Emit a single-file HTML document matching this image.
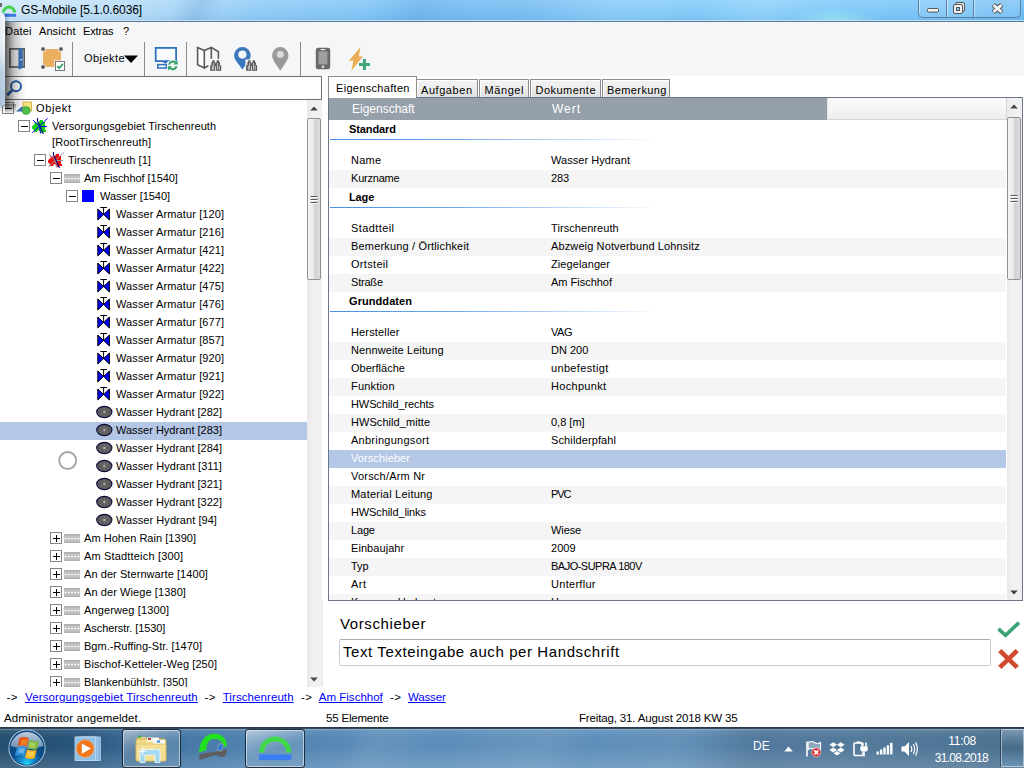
<!DOCTYPE html>
<html><head><meta charset="utf-8"><title>GS-Mobile [5.1.0.6036]</title>
<style>
html,body{margin:0;padding:0;}
body{width:1024px;height:768px;overflow:hidden;position:relative;background:#f5f6f7;font-family:"Liberation Sans",sans-serif;font-size:12px;color:#000;}
div,span,svg{position:absolute;box-sizing:border-box;}
span{white-space:nowrap;}
.t{font-size:11px;letter-spacing:0.05px;}
.tt{font-size:12px;letter-spacing:-0.15px;}
.p{font-size:11px;letter-spacing:0.16px;}
.pb{font-size:11px;font-weight:bold;letter-spacing:-0.1px;}
.h{font-size:12px;color:#fff;letter-spacing:-0.09px;}
.tab{font-size:11px;letter-spacing:0.2px;}
.big{font-size:15px;}
.inp{font-size:15px;}
.lnk{font-size:11.5px;color:#0000ff;text-decoration:underline;}
.st{font-size:11.5px;}
.tray{font-size:12px;color:#fff;}
</style></head>
<body>
<div style="left:0px;top:0px;width:1024px;height:22px;background:linear-gradient(90deg,#cfe8f9 0px,#b9ddf7 120px,#8fcbf6 260px,#7cc3f6 420px,#74bbf1 520px,#7fc8f8 640px,#86cdfa 760px,#7cc6f8 900px,#6fbdf5 1024px);"></div>
<div style="left:0px;top:0px;width:1024px;height:22px;background:linear-gradient(180deg,rgba(255,255,255,0.15) 0,rgba(255,255,255,0) 60%,rgba(40,90,150,0.10) 100%);"></div>
<div style="left:0px;top:0px;width:1024px;height:21px;background:linear-gradient(115deg,rgba(255,255,255,0) 0,rgba(255,255,255,0) 17%,rgba(60,110,170,.16) 19.500%,rgba(255,255,255,0) 22%,rgba(255,255,255,0) 36%,rgba(40,110,190,.14) 41%,rgba(255,255,255,0) 47%,rgba(255,255,255,.10) 60%,rgba(255,255,255,0) 68%,rgba(255,255,255,.08) 74%,rgba(255,255,255,0) 80%);"></div>
<div style="left:790px;top:8px;width:90px;height:13px;background:radial-gradient(ellipse at 50% 100%,rgba(170,250,235,.55) 0,rgba(170,250,235,0) 70%);"></div>
<div style="left:0px;top:21px;width:1024px;height:1px;background:#5b7a97;"></div>
<div style="left:0px;top:20px;width:1024px;height:1px;background:#cfe9fb;opacity:.8;"></div>
<svg style="left:1px;top:1px" width="18" height="18" viewBox="0 0 18 18"><path d="M2.4 11.6 A5.6 5.6 0 0 1 13.600 11.6" fill="none" stroke="#3fd24a" stroke-width="2.8"/><rect x="1.5" y="12.8" width="13.600" height="3" fill="#3b7be0"/></svg>
<span class="tt" style="left:21px;top:2.0px;line-height:16px;letter-spacing:-0.11px">GS-Mobile [5.1.0.6036]</span>
<svg style="left:916px;top:0px" width="108" height="20" viewBox="0 0 108 20">
<path d="M2.5 0 V13.5 Q2.5 17.5 6.5 17.5 H100.5 Q104.5 17.5 104.5 13.5 V0" fill="rgba(255,255,255,0.12)" stroke="#5a7fa3" stroke-width="1"/>
<path d="M30.5 0V17M57.5 0V17" stroke="#5a7fa3" stroke-width="1"/>
<path d="M31.5 0V17M58.5 0V17M3.5 0V13" stroke="rgba(255,255,255,.45)" stroke-width="1"/>
<rect x="11.5" y="8.5" width="11" height="3.6" rx="1" fill="#f2f2f2" stroke="#555" stroke-width="1"/>
<rect x="39.5" y="2.5" width="9" height="9" rx="1.5" fill="#e8e8e8" stroke="#555" stroke-width="1"/>
<rect x="37.5" y="4.5" width="9" height="9" rx="1.5" fill="#f2f2f2" stroke="#555" stroke-width="1"/>
<rect x="40.500" y="7.500" width="3" height="3" fill="#8fc4ee" stroke="#555" stroke-width="1"/>
<path d="M77.300 4.800L85.700 12.200M85.700 4.800L77.300 12.200" stroke="#4e4e4e" stroke-width="4.800" fill="none"/><path d="M77.600 5.100L85.400 11.900M85.400 5.100L77.600 11.900" stroke="#f4f4f4" stroke-width="2.800" fill="none"/>
</svg>
<div style="left:0px;top:22px;width:1024px;height:55px;background:#f5f6f7;"></div>
<span class="t" style="left:5px;top:23.0px;line-height:16px;letter-spacing:0.20px">Datei</span>
<span class="t" style="left:39px;top:23.0px;line-height:16px;letter-spacing:0.07px">Ansicht</span>
<span class="t" style="left:83px;top:23.0px;line-height:16px;letter-spacing:-0.14px">Extras</span>
<span class="t" style="left:123px;top:23.0px;line-height:16px;">?</span>
<div style="left:72px;top:42px;width:1px;height:34px;background:#8a8a8a;"></div>
<div style="left:144px;top:42px;width:1px;height:34px;background:#8a8a8a;"></div>
<div style="left:186px;top:42px;width:1px;height:34px;background:#8a8a8a;"></div>
<div style="left:300px;top:42px;width:1px;height:34px;background:#8a8a8a;"></div>
<div style="left:0px;top:76px;width:322px;height:1px;background:#6e6e6e;"></div>
<svg style="left:6px;top:44px" width="22" height="28" viewBox="0 0 22 28">
<rect x="3.900" y="4.900" width="14.300" height="18.100" fill="#f0f1f2" stroke="#585858" stroke-width="1.600"/>
<path d="M12.400 3.600 L16.900 5 V24 L12.400 25.500 Z" fill="#3a74b8"/>
<rect x="14.600" y="15" width="1.500" height="1.200" fill="#fff"/>
</svg>
<svg style="left:38px;top:44px" width="30" height="30" viewBox="0 0 30 30">
<rect x="5" y="5" width="18" height="18" rx="1.5" fill="#eab060"/>
<g fill="#4a4a4a" stroke="#f5f6f7" stroke-width=".8"><rect x="3" y="3" width="4" height="4"/><rect x="21" y="3" width="4" height="4"/><rect x="3" y="21" width="4" height="4"/></g><rect x="16.300" y="16.300" width="11.400" height="11.400" fill="#f5f6f7"/>
<rect x="17.5" y="17.5" width="9" height="9" fill="#fff" stroke="#777" stroke-width="1"/>
<path d="M19.3 22.2l2 2 3.6-4.4" fill="none" stroke="#2e9e63" stroke-width="1.8"/>
</svg>
<span class="t" style="left:84px;top:50.0px;line-height:16px;letter-spacing:0.46px">Objekte</span>
<svg style="left:122px;top:54px" width="18" height="10" viewBox="0 0 18 10"><path d="M2 1.5H16L9 9z" fill="#000"/></svg>
<svg style="left:153px;top:44px" width="28" height="28" viewBox="0 0 28 28">
<rect x="2.7" y="3.9" width="20.4" height="13.2" fill="#fafbfc" stroke="#2f72c0" stroke-width="1.8"/>
<rect x="10.5" y="17.6" width="3.5" height="1.6" fill="#2f72c0"/>
<rect x="4.8" y="20.6" width="8.6" height="3.4" fill="#fafbfc" stroke="#2f72c0" stroke-width="1.5"/>
<circle cx="19.8" cy="21.4" r="5.9" fill="#f5f6f7"/>
<path d="M16.1 20.6a3.9 3.9 0 0 1 6.6-1.9M23.5 22.2a3.9 3.9 0 0 1-6.6 1.9" fill="none" stroke="#27a05f" stroke-width="1.9"/>
<path d="M24.6 16.4v4.2h-4.2zM15 26.4v-4.2h4.2z" fill="#27a05f"/>
</svg>
<svg style="left:195px;top:44px" width="30" height="30" viewBox="0 0 30 30">
<path d="M2.6 3.6 L9.3 6.6 V24 L2.6 20.8 Z" fill="#fafbfc" stroke="#5a5a5a" stroke-width="1.6"/><path d="M9.3 6.6 L16.3 3.4 L23.4 7.8 V14.8 M16.3 3.4 V14.8 M9.3 24 L13.4 21.8" fill="none" stroke="#5a5a5a" stroke-width="1.6"/>
<g transform="translate(15.2,16.2)"><g fill="#585858"><rect x="2.2" y="0" width="2.2" height="2.4"/><rect x="1.3" y="1.8" width="3.7" height="3.6"/><rect x="0" y="5" width="5.1" height="5.6"/>
<rect x="6.6" y="0" width="2.2" height="2.4"/><rect x="6" y="1.8" width="3.7" height="3.6"/><rect x="5.9" y="5" width="5.1" height="5.6"/><rect x="4.6" y="3" width="1.8" height="3"/></g>
<g fill="#e0e0e0"><rect x="1.7" y="5.6" width=".9" height="4"/><rect x="3.2" y="2.6" width=".8" height="7"/><rect x="7.1" y="2.6" width=".8" height="7"/><rect x="8.6" y="5.6" width=".9" height="4"/></g></g></svg>
<svg style="left:231px;top:44px" width="30" height="30" viewBox="0 0 30 30">
<path d="M11.4 3 a8.3 8.3 0 0 1 8.3 8.3 c0 4.6-5 9.4-8.3 14.2 c-3.3-4.8-8.3-9.6-8.3-14.2 A8.3 8.3 0 0 1 11.4 3z" fill="#3b78bd"/>
<circle cx="11.4" cy="10.6" r="4.1" fill="#f5f6f7"/>
<rect x="14.4" y="15.4" width="13" height="13" fill="#f5f6f7"/>
<g transform="translate(15.1,16.2)"><g fill="#585858"><rect x="2.2" y="0" width="2.2" height="2.4"/><rect x="1.3" y="1.8" width="3.7" height="3.6"/><rect x="0" y="5" width="5.1" height="5.6"/>
<rect x="6.6" y="0" width="2.2" height="2.4"/><rect x="6" y="1.8" width="3.7" height="3.6"/><rect x="5.9" y="5" width="5.1" height="5.6"/><rect x="4.6" y="3" width="1.8" height="3"/></g>
<g fill="#e0e0e0"><rect x="1.7" y="5.6" width=".9" height="4"/><rect x="3.2" y="2.6" width=".8" height="7"/><rect x="7.1" y="2.6" width=".8" height="7"/><rect x="8.6" y="5.6" width=".9" height="4"/></g></g></svg>
<svg style="left:270px;top:44px" width="22" height="30" viewBox="0 0 22 30">
<path d="M10.3 3 a8.2 8.2 0 0 1 8.2 8.2 c0 4.6-4.8 10-8.2 15.6 c-3.4-5.6-8.2-11-8.2-15.6 A8.2 8.2 0 0 1 10.3 3z" fill="#9a9a9a"/>
<circle cx="10.3" cy="10.4" r="3.4" fill="#dcdcdc"/></svg>
<svg style="left:313px;top:45px" width="20" height="26" viewBox="0 0 20 26">
<rect x="2.8" y="2.8" width="14.4" height="21.4" rx="2.2" fill="#6a6a6a"/>
<rect x="5.6" y="6.4" width="8.8" height="13" fill="#a0a0a0"/>
<rect x="7.5" y="4" width="5" height="1.2" rx=".6" fill="#e6e6e6"/>
<circle cx="10" cy="21.8" r="1.3" fill="#e6e6e6"/></svg>
<svg style="left:346px;top:44px" width="28" height="30" viewBox="0 0 28 30">
<path d="M14.600 3 L2.700 16.900 L7.600 16.600 L5.250 26.900 L17 12.200 L12.750 12.600 Z" fill="#ebae52"/>
<path d="M13 20.450H24M18.450 15V26" stroke="#3fa779" stroke-width="3"/></svg>
<div style="left:0px;top:75.5px;width:1024px;height:652.5px;background:#fff;"></div>
<div style="left:-1px;top:76px;width:323px;height:24px;background:#fff;border:1px solid #6e6e6e;"></div>
<svg style="left:3px;top:78px" width="22" height="22" viewBox="0 0 22 22">
<circle cx="13" cy="8.200" r="5" fill="none" stroke="#1f5fa8" stroke-width="1.900"/>
<path d="M9 12.400 L4.200 17.200" stroke="#1f5fa8" stroke-width="2.700"/></svg>
<div style="left:0px;top:422px;width:307px;height:18px;background:#b4c7e7;"></div>
<div style="left:2px;top:102px;width:12px;height:12px;border:1px solid #848484;background:#fff;"><div style="left:2px;top:5px;width:7px;height:1px;background:#000"></div></div>
<svg style="left:15px;top:101px" width="18" height="15" viewBox="0 0 18 15">
<rect x="8" y="1" width="8.5" height="9" fill="#f6e27a" stroke="#c9a93a" stroke-width=".8"/>
<path d="M1 10.5 L7.5 5 V10.5 Z" fill="#3a73b8"/>
<circle cx="11.2" cy="9.6" r="4" fill="#4fbf4a" stroke="#2f8f34" stroke-width=".6"/></svg>
<span class="t" style="left:36px;top:100.0px;line-height:16px;letter-spacing:0.64px">Objekt</span>
<div style="left:18px;top:120px;width:12px;height:12px;border:1px solid #848484;background:#fff;"><div style="left:2px;top:5px;width:7px;height:1px;background:#000"></div></div>
<svg style="left:32px;top:118px" width="16" height="16" viewBox="0 0 16 16">
<path d="M8 2H11V4H13V12H14V14H11V15H9L8 13L6 12L5 14H2V12L0 10.5V9L1 7L3 6L2 4H4L5 5L7 4L7.5 3Z" fill="#10d010"/>
<path d="M.3 14.700L15.700 .3M1 2L7 8M8 8.500H15M7.500 9L8.500 15.500" stroke="#0000ff" stroke-width="1" fill="none"/>
<path d="M5.500 0V3L7 6L8 8L9.500 12L11 15L11.500 16" stroke="#00008a" stroke-width="1.100" fill="none"/></svg>
<span class="t" style="left:52px;top:118.0px;line-height:16px;letter-spacing:0.09px">Versorgungsgebiet Tirschenreuth</span>
<span class="t" style="left:52px;top:134.0px;line-height:16px;letter-spacing:0.16px">[RootTirschenreuth]</span>
<div style="left:34px;top:154px;width:12px;height:12px;border:1px solid #848484;background:#fff;"><div style="left:2px;top:5px;width:7px;height:1px;background:#000"></div></div>
<svg style="left:48px;top:152px" width="16" height="16" viewBox="0 0 16 16">
<path d="M8 2H11V4H13V12H14V14H11V15H9L8 13L6 12L5 14H2V12L0 10.5V9L1 7L3 6L2 4H4L5 5L7 4L7.5 3Z" fill="#ee0a0a"/>
<path d="M.3 14.700L15.700 .3M1 2L7 8M8 8.500H15M7.500 9L8.500 15.500" stroke="#9a9a9a" stroke-width="1" fill="none"/>
<path d="M5.500 0V3L7 6L8 8L9.500 12L11 15L11.500 16" stroke="#00008a" stroke-width="1.100" fill="none"/></svg>
<span class="t" style="left:68px;top:152.0px;line-height:16px;letter-spacing:0.05px">Tirschenreuth [1]</span>
<div style="left:50px;top:172px;width:12px;height:12px;border:1px solid #848484;background:#fff;"><div style="left:2px;top:5px;width:7px;height:1px;background:#000"></div></div>
<svg style="left:64px;top:174px" width="16" height="9" viewBox="0 0 16 9"><rect width="16" height="9" fill="#c4c4c4"/><rect y="0" width="16" height="1.6" fill="#b0b0b0"/><rect y="7.4" width="16" height="1.6" fill="#b0b0b0"/><path d="M1 4.5H15" stroke="#fff" stroke-width="1" stroke-dasharray="2 1"/></svg>
<span class="t" style="left:84px;top:170.0px;line-height:16px;letter-spacing:-0.05px">Am Fischhof [1540]</span>
<div style="left:66px;top:190px;width:12px;height:12px;border:1px solid #848484;background:#fff;"><div style="left:2px;top:5px;width:7px;height:1px;background:#000"></div></div>
<div style="left:82px;top:190px;width:12px;height:12px;background:#0000ff;"></div>
<span class="t" style="left:100px;top:188.0px;line-height:16px;letter-spacing:-0.04px">Wasser [1540]</span>
<svg style="left:97px;top:206px" width="14" height="15" viewBox="0 0 14 15"><path d="M3.300 1.500H9.900M6.600 1.500V8" stroke="#000" stroke-width="1" fill="none"/><path d="M.8 3 L6.600 8.500 L.8 14 Z M12.400 3 L6.600 8.500 L12.400 14 Z" fill="#0000ff" stroke="#000" stroke-width="1" stroke-linejoin="miter"/></svg>
<span class="t" style="left:116px;top:206.0px;line-height:16px;letter-spacing:0.11px">Wasser Armatur [120]</span>
<svg style="left:97px;top:224px" width="14" height="15" viewBox="0 0 14 15"><path d="M3.300 1.500H9.900M6.600 1.500V8" stroke="#000" stroke-width="1" fill="none"/><path d="M.8 3 L6.600 8.500 L.8 14 Z M12.400 3 L6.600 8.500 L12.400 14 Z" fill="#0000ff" stroke="#000" stroke-width="1" stroke-linejoin="miter"/></svg>
<span class="t" style="left:116px;top:224.0px;line-height:16px;letter-spacing:0.11px">Wasser Armatur [216]</span>
<svg style="left:97px;top:242px" width="14" height="15" viewBox="0 0 14 15"><path d="M3.300 1.500H9.900M6.600 1.500V8" stroke="#000" stroke-width="1" fill="none"/><path d="M.8 3 L6.600 8.500 L.8 14 Z M12.400 3 L6.600 8.500 L12.400 14 Z" fill="#0000ff" stroke="#000" stroke-width="1" stroke-linejoin="miter"/></svg>
<span class="t" style="left:116px;top:242.0px;line-height:16px;letter-spacing:0.11px">Wasser Armatur [421]</span>
<svg style="left:97px;top:260px" width="14" height="15" viewBox="0 0 14 15"><path d="M3.300 1.500H9.900M6.600 1.500V8" stroke="#000" stroke-width="1" fill="none"/><path d="M.8 3 L6.600 8.500 L.8 14 Z M12.400 3 L6.600 8.500 L12.400 14 Z" fill="#0000ff" stroke="#000" stroke-width="1" stroke-linejoin="miter"/></svg>
<span class="t" style="left:116px;top:260.0px;line-height:16px;letter-spacing:0.11px">Wasser Armatur [422]</span>
<svg style="left:97px;top:278px" width="14" height="15" viewBox="0 0 14 15"><path d="M3.300 1.500H9.900M6.600 1.500V8" stroke="#000" stroke-width="1" fill="none"/><path d="M.8 3 L6.600 8.500 L.8 14 Z M12.400 3 L6.600 8.500 L12.400 14 Z" fill="#0000ff" stroke="#000" stroke-width="1" stroke-linejoin="miter"/></svg>
<span class="t" style="left:116px;top:278.0px;line-height:16px;letter-spacing:0.11px">Wasser Armatur [475]</span>
<svg style="left:97px;top:296px" width="14" height="15" viewBox="0 0 14 15"><path d="M3.300 1.500H9.900M6.600 1.500V8" stroke="#000" stroke-width="1" fill="none"/><path d="M.8 3 L6.600 8.500 L.8 14 Z M12.400 3 L6.600 8.500 L12.400 14 Z" fill="#0000ff" stroke="#000" stroke-width="1" stroke-linejoin="miter"/></svg>
<span class="t" style="left:116px;top:296.0px;line-height:16px;letter-spacing:0.11px">Wasser Armatur [476]</span>
<svg style="left:97px;top:314px" width="14" height="15" viewBox="0 0 14 15"><path d="M3.300 1.500H9.900M6.600 1.500V8" stroke="#000" stroke-width="1" fill="none"/><path d="M.8 3 L6.600 8.500 L.8 14 Z M12.400 3 L6.600 8.500 L12.400 14 Z" fill="#0000ff" stroke="#000" stroke-width="1" stroke-linejoin="miter"/></svg>
<span class="t" style="left:116px;top:314.0px;line-height:16px;letter-spacing:0.11px">Wasser Armatur [677]</span>
<svg style="left:97px;top:332px" width="14" height="15" viewBox="0 0 14 15"><path d="M3.300 1.500H9.900M6.600 1.500V8" stroke="#000" stroke-width="1" fill="none"/><path d="M.8 3 L6.600 8.500 L.8 14 Z M12.400 3 L6.600 8.500 L12.400 14 Z" fill="#0000ff" stroke="#000" stroke-width="1" stroke-linejoin="miter"/></svg>
<span class="t" style="left:116px;top:332.0px;line-height:16px;letter-spacing:0.11px">Wasser Armatur [857]</span>
<svg style="left:97px;top:350px" width="14" height="15" viewBox="0 0 14 15"><path d="M3.300 1.500H9.900M6.600 1.500V8" stroke="#000" stroke-width="1" fill="none"/><path d="M.8 3 L6.600 8.500 L.8 14 Z M12.400 3 L6.600 8.500 L12.400 14 Z" fill="#0000ff" stroke="#000" stroke-width="1" stroke-linejoin="miter"/></svg>
<span class="t" style="left:116px;top:350.0px;line-height:16px;letter-spacing:0.11px">Wasser Armatur [920]</span>
<svg style="left:97px;top:368px" width="14" height="15" viewBox="0 0 14 15"><path d="M3.300 1.500H9.900M6.600 1.500V8" stroke="#000" stroke-width="1" fill="none"/><path d="M.8 3 L6.600 8.500 L.8 14 Z M12.400 3 L6.600 8.500 L12.400 14 Z" fill="#0000ff" stroke="#000" stroke-width="1" stroke-linejoin="miter"/></svg>
<span class="t" style="left:116px;top:368.0px;line-height:16px;letter-spacing:0.11px">Wasser Armatur [921]</span>
<svg style="left:97px;top:386px" width="14" height="15" viewBox="0 0 14 15"><path d="M3.300 1.500H9.900M6.600 1.500V8" stroke="#000" stroke-width="1" fill="none"/><path d="M.8 3 L6.600 8.500 L.8 14 Z M12.400 3 L6.600 8.500 L12.400 14 Z" fill="#0000ff" stroke="#000" stroke-width="1" stroke-linejoin="miter"/></svg>
<span class="t" style="left:116px;top:386.0px;line-height:16px;letter-spacing:0.11px">Wasser Armatur [922]</span>
<svg style="left:96px;top:405px" width="17" height="14" viewBox="0 0 17 14"><ellipse cx="8.3" cy="7" rx="7.6" ry="5.6" fill="#5c5c5c" stroke="#0a0a3a" stroke-width="1.1"/><path d="M4 4L12.6 10M12.6 4L4 10M8.3 2.4V11.6" stroke="#7a7a7a" stroke-width=".7"/><circle cx="8.3" cy="7" r="1.1" fill="#b8b8b8"/></svg>
<span class="t" style="left:116px;top:404.0px;line-height:16px;letter-spacing:0.00px">Wasser Hydrant [282]</span>
<svg style="left:96px;top:423px" width="17" height="14" viewBox="0 0 17 14"><ellipse cx="8.3" cy="7" rx="7.6" ry="5.6" fill="#5c5c5c" stroke="#0a0a3a" stroke-width="1.1"/><path d="M4 4L12.6 10M12.6 4L4 10M8.3 2.4V11.6" stroke="#7a7a7a" stroke-width=".7"/><circle cx="8.3" cy="7" r="1.1" fill="#b8b8b8"/></svg>
<span class="t" style="left:116px;top:422.0px;line-height:16px;letter-spacing:0.00px">Wasser Hydrant [283]</span>
<svg style="left:96px;top:441px" width="17" height="14" viewBox="0 0 17 14"><ellipse cx="8.3" cy="7" rx="7.6" ry="5.6" fill="#5c5c5c" stroke="#0a0a3a" stroke-width="1.1"/><path d="M4 4L12.6 10M12.6 4L4 10M8.3 2.4V11.6" stroke="#7a7a7a" stroke-width=".7"/><circle cx="8.3" cy="7" r="1.1" fill="#b8b8b8"/></svg>
<span class="t" style="left:116px;top:440.0px;line-height:16px;letter-spacing:0.00px">Wasser Hydrant [284]</span>
<svg style="left:96px;top:459px" width="17" height="14" viewBox="0 0 17 14"><ellipse cx="8.3" cy="7" rx="7.6" ry="5.6" fill="#5c5c5c" stroke="#0a0a3a" stroke-width="1.1"/><path d="M4 4L12.6 10M12.6 4L4 10M8.3 2.4V11.6" stroke="#7a7a7a" stroke-width=".7"/><circle cx="8.3" cy="7" r="1.1" fill="#b8b8b8"/></svg>
<span class="t" style="left:116px;top:458.0px;line-height:16px;letter-spacing:0.04px">Wasser Hydrant [311]</span>
<svg style="left:96px;top:477px" width="17" height="14" viewBox="0 0 17 14"><ellipse cx="8.3" cy="7" rx="7.6" ry="5.6" fill="#5c5c5c" stroke="#0a0a3a" stroke-width="1.1"/><path d="M4 4L12.6 10M12.6 4L4 10M8.3 2.4V11.6" stroke="#7a7a7a" stroke-width=".7"/><circle cx="8.3" cy="7" r="1.1" fill="#b8b8b8"/></svg>
<span class="t" style="left:116px;top:476.0px;line-height:16px;letter-spacing:0.00px">Wasser Hydrant [321]</span>
<svg style="left:96px;top:495px" width="17" height="14" viewBox="0 0 17 14"><ellipse cx="8.3" cy="7" rx="7.6" ry="5.6" fill="#5c5c5c" stroke="#0a0a3a" stroke-width="1.1"/><path d="M4 4L12.6 10M12.6 4L4 10M8.3 2.4V11.6" stroke="#7a7a7a" stroke-width=".7"/><circle cx="8.3" cy="7" r="1.1" fill="#b8b8b8"/></svg>
<span class="t" style="left:116px;top:494.0px;line-height:16px;letter-spacing:0.00px">Wasser Hydrant [322]</span>
<svg style="left:96px;top:513px" width="17" height="14" viewBox="0 0 17 14"><ellipse cx="8.3" cy="7" rx="7.6" ry="5.6" fill="#5c5c5c" stroke="#0a0a3a" stroke-width="1.1"/><path d="M4 4L12.6 10M12.6 4L4 10M8.3 2.4V11.6" stroke="#7a7a7a" stroke-width=".7"/><circle cx="8.3" cy="7" r="1.1" fill="#b8b8b8"/></svg>
<span class="t" style="left:116px;top:512.0px;line-height:16px;letter-spacing:0.06px">Wasser Hydrant [94]</span>
<div style="left:50px;top:532px;width:12px;height:12px;border:1px solid #848484;background:#fff;"><div style="left:2px;top:5px;width:7px;height:1px;background:#000"></div><div style="left:5px;top:2px;width:1px;height:7px;background:#000"></div></div>
<svg style="left:64px;top:534px" width="16" height="9" viewBox="0 0 16 9"><rect width="16" height="9" fill="#c4c4c4"/><rect y="0" width="16" height="1.6" fill="#b0b0b0"/><rect y="7.4" width="16" height="1.6" fill="#b0b0b0"/><path d="M1 4.5H15" stroke="#fff" stroke-width="1" stroke-dasharray="2 1"/></svg>
<span class="t" style="left:84px;top:530.0px;line-height:16px;letter-spacing:0.04px">Am Hohen Rain [1390]</span>
<div style="left:50px;top:550px;width:12px;height:12px;border:1px solid #848484;background:#fff;"><div style="left:2px;top:5px;width:7px;height:1px;background:#000"></div><div style="left:5px;top:2px;width:1px;height:7px;background:#000"></div></div>
<svg style="left:64px;top:552px" width="16" height="9" viewBox="0 0 16 9"><rect width="16" height="9" fill="#c4c4c4"/><rect y="0" width="16" height="1.6" fill="#b0b0b0"/><rect y="7.4" width="16" height="1.6" fill="#b0b0b0"/><path d="M1 4.5H15" stroke="#fff" stroke-width="1" stroke-dasharray="2 1"/></svg>
<span class="t" style="left:84px;top:548.0px;line-height:16px;letter-spacing:0.17px">Am Stadtteich [300]</span>
<div style="left:50px;top:568px;width:12px;height:12px;border:1px solid #848484;background:#fff;"><div style="left:2px;top:5px;width:7px;height:1px;background:#000"></div><div style="left:5px;top:2px;width:1px;height:7px;background:#000"></div></div>
<svg style="left:64px;top:570px" width="16" height="9" viewBox="0 0 16 9"><rect width="16" height="9" fill="#c4c4c4"/><rect y="0" width="16" height="1.6" fill="#b0b0b0"/><rect y="7.4" width="16" height="1.6" fill="#b0b0b0"/><path d="M1 4.5H15" stroke="#fff" stroke-width="1" stroke-dasharray="2 1"/></svg>
<span class="t" style="left:84px;top:566.0px;line-height:16px;letter-spacing:0.07px">An der Sternwarte [1400]</span>
<div style="left:50px;top:586px;width:12px;height:12px;border:1px solid #848484;background:#fff;"><div style="left:2px;top:5px;width:7px;height:1px;background:#000"></div><div style="left:5px;top:2px;width:1px;height:7px;background:#000"></div></div>
<svg style="left:64px;top:588px" width="16" height="9" viewBox="0 0 16 9"><rect width="16" height="9" fill="#c4c4c4"/><rect y="0" width="16" height="1.6" fill="#b0b0b0"/><rect y="7.4" width="16" height="1.6" fill="#b0b0b0"/><path d="M1 4.5H15" stroke="#fff" stroke-width="1" stroke-dasharray="2 1"/></svg>
<span class="t" style="left:84px;top:584.0px;line-height:16px;letter-spacing:0.09px">An der Wiege [1380]</span>
<div style="left:50px;top:604px;width:12px;height:12px;border:1px solid #848484;background:#fff;"><div style="left:2px;top:5px;width:7px;height:1px;background:#000"></div><div style="left:5px;top:2px;width:1px;height:7px;background:#000"></div></div>
<svg style="left:64px;top:606px" width="16" height="9" viewBox="0 0 16 9"><rect width="16" height="9" fill="#c4c4c4"/><rect y="0" width="16" height="1.6" fill="#b0b0b0"/><rect y="7.4" width="16" height="1.6" fill="#b0b0b0"/><path d="M1 4.5H15" stroke="#fff" stroke-width="1" stroke-dasharray="2 1"/></svg>
<span class="t" style="left:84px;top:602.0px;line-height:16px;letter-spacing:0.13px">Angerweg [1300]</span>
<div style="left:50px;top:622px;width:12px;height:12px;border:1px solid #848484;background:#fff;"><div style="left:2px;top:5px;width:7px;height:1px;background:#000"></div><div style="left:5px;top:2px;width:1px;height:7px;background:#000"></div></div>
<svg style="left:64px;top:624px" width="16" height="9" viewBox="0 0 16 9"><rect width="16" height="9" fill="#c4c4c4"/><rect y="0" width="16" height="1.6" fill="#b0b0b0"/><rect y="7.4" width="16" height="1.6" fill="#b0b0b0"/><path d="M1 4.5H15" stroke="#fff" stroke-width="1" stroke-dasharray="2 1"/></svg>
<span class="t" style="left:84px;top:620.0px;line-height:16px;letter-spacing:-0.07px">Ascherstr. [1530]</span>
<div style="left:50px;top:640px;width:12px;height:12px;border:1px solid #848484;background:#fff;"><div style="left:2px;top:5px;width:7px;height:1px;background:#000"></div><div style="left:5px;top:2px;width:1px;height:7px;background:#000"></div></div>
<svg style="left:64px;top:642px" width="16" height="9" viewBox="0 0 16 9"><rect width="16" height="9" fill="#c4c4c4"/><rect y="0" width="16" height="1.6" fill="#b0b0b0"/><rect y="7.4" width="16" height="1.6" fill="#b0b0b0"/><path d="M1 4.5H15" stroke="#fff" stroke-width="1" stroke-dasharray="2 1"/></svg>
<span class="t" style="left:84px;top:638.0px;line-height:16px;letter-spacing:0.01px">Bgm.-Ruffing-Str. [1470]</span>
<div style="left:50px;top:658px;width:12px;height:12px;border:1px solid #848484;background:#fff;"><div style="left:2px;top:5px;width:7px;height:1px;background:#000"></div><div style="left:5px;top:2px;width:1px;height:7px;background:#000"></div></div>
<svg style="left:64px;top:660px" width="16" height="9" viewBox="0 0 16 9"><rect width="16" height="9" fill="#c4c4c4"/><rect y="0" width="16" height="1.6" fill="#b0b0b0"/><rect y="7.4" width="16" height="1.6" fill="#b0b0b0"/><path d="M1 4.5H15" stroke="#fff" stroke-width="1" stroke-dasharray="2 1"/></svg>
<span class="t" style="left:84px;top:656.0px;line-height:16px;letter-spacing:0.07px">Bischof-Ketteler-Weg [250]</span>
<div style="left:50px;top:676px;width:12px;height:12px;border:1px solid #848484;background:#fff;"><div style="left:2px;top:5px;width:7px;height:1px;background:#000"></div><div style="left:5px;top:2px;width:1px;height:7px;background:#000"></div></div>
<svg style="left:64px;top:678px" width="16" height="9" viewBox="0 0 16 9"><rect width="16" height="9" fill="#c4c4c4"/><rect y="0" width="16" height="1.6" fill="#b0b0b0"/><rect y="7.4" width="16" height="1.6" fill="#b0b0b0"/><path d="M1 4.5H15" stroke="#fff" stroke-width="1" stroke-dasharray="2 1"/></svg>
<span class="t" style="left:84px;top:674.0px;line-height:16px;letter-spacing:0.04px">Blankenbühlstr. [350]</span>
<div style="left:0px;top:687px;width:322px;height:10px;background:#fff;"></div>
<svg style="left:56px;top:449px" width="24" height="24" viewBox="0 0 24 24"><circle cx="11.700" cy="11.500" r="8.500" fill="#fff" stroke="#a4a4a4" stroke-width="1.800"/></svg>
<div style="left:307px;top:100px;width:15px;height:587px;background:linear-gradient(90deg,#e9e9e9,#f2f2f2 40%,#f0f0f0);"></div>
<div style="left:307.3px;top:118px;width:13.4px;height:162px;border:1px solid #919191;border-radius:2px;background:linear-gradient(90deg,#f5f5f5 0,#ebebec 45%,#d2d2d5 55%,#dcdcdf 100%);"></div>
<svg style="left:310px;top:195px" width="8" height="9" viewBox="0 0 8 9"><path d="M.5 1.500H7.500M.5 4.500H7.500M.5 7.500H7.500" stroke="#5a5a5a" stroke-width="1"/><path d="M.5 2.500H7.500M.5 5.500H7.500M.5 8.500H7.500" stroke="#fff" stroke-width="1"/></svg>
<svg style="left:310px;top:106px" width="8" height="5" viewBox="0 0 8 5"><path d="M4 .4L7.800 4.600H.2z" fill="#444"/></svg>
<svg style="left:310px;top:677px" width="8" height="5" viewBox="0 0 8 5"><path d="M4 4.600L7.800 .4H.2z" fill="#444"/></svg>
<div style="left:416px;top:78.5px;width:61.5px;height:19px;border:1px solid #8c8c8c;border-bottom:none;background:linear-gradient(180deg,#f3f3f3 0,#ececec 50%,#dddddd 100%);box-shadow:inset 1px 1px 0 #fff;"></div>
<span class="tab" style="left:421px;top:82.0px;line-height:16px;letter-spacing:0.56px">Aufgaben</span>
<div style="left:478.5px;top:78.5px;width:50.0px;height:19px;border:1px solid #8c8c8c;border-bottom:none;background:linear-gradient(180deg,#f3f3f3 0,#ececec 50%,#dddddd 100%);box-shadow:inset 1px 1px 0 #fff;"></div>
<span class="tab" style="left:484.5px;top:82.0px;line-height:16px;letter-spacing:0.58px">Mängel</span>
<div style="left:529.5px;top:78.5px;width:71.0px;height:19px;border:1px solid #8c8c8c;border-bottom:none;background:linear-gradient(180deg,#f3f3f3 0,#ececec 50%,#dddddd 100%);box-shadow:inset 1px 1px 0 #fff;"></div>
<span class="tab" style="left:535.5px;top:82.0px;line-height:16px;letter-spacing:0.47px">Dokumente</span>
<div style="left:601.5px;top:78.5px;width:68.5px;height:19px;border:1px solid #8c8c8c;border-bottom:none;background:linear-gradient(180deg,#f3f3f3 0,#ececec 50%,#dddddd 100%);box-shadow:inset 1px 1px 0 #fff;"></div>
<span class="tab" style="left:607px;top:82.0px;line-height:16px;letter-spacing:0.40px">Bemerkung</span>
<div style="left:328px;top:97px;width:695px;height:504px;border:1px solid #6c7686;background:#fff;"></div>
<div style="left:328px;top:76px;width:89px;height:22px;border:1px solid #8c8c8c;border-bottom:none;background:#fff;"></div>
<span class="tab" style="left:336px;top:80.0px;line-height:16px;letter-spacing:0.31px">Eigenschaften</span>
<div style="left:329px;top:98px;width:498px;height:22px;background:#96a0aa;"></div>
<div style="left:827px;top:98px;width:180px;height:21.5px;background:linear-gradient(180deg,#fafafa,#f3f3f3 60%,#ececec);border-right:1px solid #d5d8d8;border-bottom:1px solid #d5d8d8;border-left:1px solid #e4e4e4"></div>
<span class="h" style="left:352px;top:100.5px;line-height:16px;letter-spacing:-0.00px">Eigenschaft</span>
<span class="h" style="left:552px;top:100.5px;line-height:16px;letter-spacing:0.96px">Wert</span>
<span class="pb" style="left:349px;top:121.0px;line-height:16px;letter-spacing:-0.10px">Standard</span>
<div style="left:330px;top:139px;width:330px;height:1px;background:linear-gradient(90deg,#4a90e8 0,#6aa6ee 35%,#b9d5f7 70%,#ffffff 100%);"></div>
<span class="p" style="left:351px;top:152.0px;line-height:16px;letter-spacing:0.22px">Name</span>
<span class="p" style="left:551px;top:152.0px;line-height:16px;letter-spacing:0.04px">Wasser Hydrant</span>
<div style="left:329px;top:170px;width:677px;height:18px;background:#f5f5f5;"></div>
<span class="p" style="left:351px;top:170.0px;line-height:16px;letter-spacing:-0.21px">Kurzname</span>
<span class="p" style="left:551px;top:170.0px;line-height:16px;letter-spacing:-0.18px">283</span>
<span class="pb" style="left:349px;top:189.0px;line-height:16px;letter-spacing:-0.13px">Lage</span>
<div style="left:330px;top:207px;width:330px;height:1px;background:linear-gradient(90deg,#4a90e8 0,#6aa6ee 35%,#b9d5f7 70%,#ffffff 100%);"></div>
<span class="p" style="left:351px;top:220.0px;line-height:16px;letter-spacing:0.41px">Stadtteil</span>
<span class="p" style="left:551px;top:220.0px;line-height:16px;letter-spacing:0.07px">Tirschenreuth</span>
<div style="left:329px;top:238px;width:677px;height:18px;background:#f5f5f5;"></div>
<span class="p" style="left:351px;top:238.0px;line-height:16px;letter-spacing:0.17px">Bemerkung / Örtlichkeit</span>
<span class="p" style="left:551px;top:238.0px;line-height:16px;letter-spacing:0.12px">Abzweig Notverbund Lohnsitz</span>
<span class="p" style="left:351px;top:256.0px;line-height:16px;letter-spacing:0.31px">Ortsteil</span>
<span class="p" style="left:551px;top:256.0px;line-height:16px;letter-spacing:0.09px">Ziegelanger</span>
<div style="left:329px;top:274px;width:677px;height:18px;background:#f5f5f5;"></div>
<span class="p" style="left:351px;top:274.0px;line-height:16px;letter-spacing:-0.20px">Straße</span>
<span class="p" style="left:551px;top:274.0px;line-height:16px;letter-spacing:-0.01px">Am Fischhof</span>
<span class="pb" style="left:349px;top:293.0px;line-height:16px;letter-spacing:0.07px">Grunddaten</span>
<div style="left:330px;top:311px;width:330px;height:1px;background:linear-gradient(90deg,#4a90e8 0,#6aa6ee 35%,#b9d5f7 70%,#ffffff 100%);"></div>
<span class="p" style="left:351px;top:324.0px;line-height:16px;letter-spacing:0.15px">Hersteller</span>
<span class="p" style="left:551px;top:324.0px;line-height:16px;letter-spacing:-0.41px">VAG</span>
<div style="left:329px;top:342px;width:677px;height:18px;background:#f5f5f5;"></div>
<span class="p" style="left:351px;top:342.0px;line-height:16px;letter-spacing:0.09px">Nennweite Leitung</span>
<span class="p" style="left:551px;top:342.0px;line-height:16px;letter-spacing:0.00px">DN 200</span>
<span class="p" style="left:351px;top:360.0px;line-height:16px;letter-spacing:0.02px">Oberfläche</span>
<span class="p" style="left:551px;top:360.0px;line-height:16px;letter-spacing:0.34px">unbefestigt</span>
<div style="left:329px;top:378px;width:677px;height:18px;background:#f5f5f5;"></div>
<span class="p" style="left:351px;top:378.0px;line-height:16px;letter-spacing:0.19px">Funktion</span>
<span class="p" style="left:551px;top:378.0px;line-height:16px;letter-spacing:0.30px">Hochpunkt</span>
<span class="p" style="left:351px;top:396.0px;line-height:16px;letter-spacing:-0.10px">HWSchild_rechts</span>
<div style="left:329px;top:414px;width:677px;height:18px;background:#f5f5f5;"></div>
<span class="p" style="left:351px;top:414.0px;line-height:16px;letter-spacing:0.06px">HWSchild_mitte</span>
<span class="p" style="left:551px;top:414.0px;line-height:16px;letter-spacing:-0.00px">0,8 [m]</span>
<span class="p" style="left:351px;top:432.0px;line-height:16px;letter-spacing:0.26px">Anbringungsort</span>
<span class="p" style="left:551px;top:432.0px;line-height:16px;letter-spacing:0.12px">Schilderpfahl</span>
<div style="left:329px;top:450px;width:677px;height:18px;background:#b4c7e7;"></div>
<span class="p" style="left:351px;top:450.0px;line-height:16px;color:#fff;letter-spacing:0.09px">Vorschieber</span>
<span class="p" style="left:351px;top:468.0px;line-height:16px;letter-spacing:0.21px">Vorsch/Arm Nr</span>
<div style="left:329px;top:486px;width:677px;height:18px;background:#f5f5f5;"></div>
<span class="p" style="left:351px;top:486.0px;line-height:16px;letter-spacing:0.21px">Material Leitung</span>
<span class="p" style="left:551px;top:486.0px;line-height:16px;letter-spacing:-1.06px">PVC</span>
<span class="p" style="left:351px;top:504.0px;line-height:16px;letter-spacing:-0.11px">HWSchild_links</span>
<div style="left:329px;top:522px;width:677px;height:18px;background:#f5f5f5;"></div>
<span class="p" style="left:351px;top:522.0px;line-height:16px;letter-spacing:-0.16px">Lage</span>
<span class="p" style="left:551px;top:522.0px;line-height:16px;letter-spacing:-0.09px">Wiese</span>
<span class="p" style="left:351px;top:540.0px;line-height:16px;letter-spacing:0.07px">Einbaujahr</span>
<span class="p" style="left:551px;top:540.0px;line-height:16px;letter-spacing:0.04px">2009</span>
<div style="left:329px;top:558px;width:677px;height:18px;background:#f5f5f5;"></div>
<span class="p" style="left:351px;top:558.0px;line-height:16px;letter-spacing:-0.07px">Typ</span>
<span class="p" style="left:551px;top:558.0px;line-height:16px;letter-spacing:-0.51px">BAJO-SUPRA 180V</span>
<span class="p" style="left:351px;top:576.0px;line-height:16px;letter-spacing:0.47px">Art</span>
<span class="p" style="left:551px;top:576.0px;line-height:16px;letter-spacing:0.29px">Unterflur</span>
<div style="left:329px;top:594px;width:677px;height:18px;background:#f5f5f5;"></div>
<span class="p" style="left:351px;top:594.0px;line-height:16px;letter-spacing:-0.04px">Kennung Hydrant</span>
<span class="p" style="left:551px;top:594.0px;line-height:16px;">H</span>
<div style="left:328px;top:600px;width:695px;height:1px;background:#6c7686;"></div>
<div style="left:323px;top:601px;width:701px;height:14px;background:#fff;"></div>
<div style="left:1007px;top:98px;width:15px;height:502px;background:linear-gradient(90deg,#e9e9e9,#f2f2f2 40%,#f0f0f0);"></div>
<div style="left:1007.3px;top:117px;width:13.4px;height:163px;border:1px solid #919191;border-radius:2px;background:linear-gradient(90deg,#f5f5f5 0,#ebebec 45%,#d2d2d5 55%,#dcdcdf 100%);"></div>
<svg style="left:1010px;top:194px" width="8" height="9" viewBox="0 0 8 9"><path d="M.5 1.500H7.500M.5 4.500H7.500M.5 7.500H7.500" stroke="#5a5a5a" stroke-width="1"/><path d="M.5 2.500H7.500M.5 5.500H7.500M.5 8.500H7.500" stroke="#fff" stroke-width="1"/></svg>
<svg style="left:1010px;top:104px" width="8" height="5" viewBox="0 0 8 5"><path d="M4 .4L7.800 4.600H.2z" fill="#444"/></svg>
<svg style="left:1010px;top:590px" width="8" height="5" viewBox="0 0 8 5"><path d="M4 4.600L7.800 .4H.2z" fill="#444"/></svg>
<div style="left:322px;top:601px;width:1px;height:86px;background:#ececec;"></div>
<span class="big" style="left:340px;top:613.5px;line-height:20px;letter-spacing:0.62px">Vorschieber</span>
<div style="left:339px;top:639px;width:652px;height:27px;background:#fff;border:1px solid #c9ccd4;border-top-color:#a9adb8;border-radius:2px;"></div>
<span class="inp" style="left:343px;top:642.0px;line-height:20px;letter-spacing:0.59px">Text Texteingabe auch per Handschrift</span>
<svg style="left:996px;top:619px" width="26" height="20" viewBox="0 0 26 20"><path d="M2.400 9.800 L9.600 16.400 L23 3.600" fill="none" stroke="#3aa573" stroke-width="3.600"/></svg>
<svg style="left:997px;top:647px" width="24" height="24" viewBox="0 0 24 24"><path d="M2.800 3.600 L20.200 20.400 M20.200 3.600 L2.800 20.400" fill="none" stroke="#d1492e" stroke-width="4.700"/></svg>
<span class="st" style="left:6.5px;top:689.0px;line-height:16px;letter-spacing:0.45px">-&gt;</span>
<span class="lnk" style="left:25px;top:689.0px;line-height:16px;letter-spacing:0.13px">Versorgungsgebiet Tirschenreuth</span>
<span class="st" style="left:204.6px;top:689.0px;line-height:16px;letter-spacing:0.45px">-&gt;</span>
<span class="lnk" style="left:222.7px;top:689.0px;line-height:16px;letter-spacing:0.08px">Tirschenreuth</span>
<span class="st" style="left:301px;top:689.0px;line-height:16px;letter-spacing:0.45px">-&gt;</span>
<span class="lnk" style="left:318.8px;top:689.0px;line-height:16px;letter-spacing:0.01px">Am Fischhof</span>
<span class="st" style="left:390px;top:689.0px;line-height:16px;letter-spacing:0.45px">-&gt;</span>
<span class="lnk" style="left:408px;top:689.0px;line-height:16px;letter-spacing:-0.15px">Wasser</span>
<span class="st" style="left:4px;top:710.0px;line-height:16px;letter-spacing:0.12px">Administrator angemeldet.</span>
<span class="st" style="left:326px;top:710.0px;line-height:16px;letter-spacing:-0.19px">55 Elemente</span>
<span class="st" style="left:579px;top:710.0px;line-height:16px;letter-spacing:-0.15px">Freitag, 31. August 2018 KW 35</span>
<div style="left:0px;top:728px;width:1024px;height:40px;background:linear-gradient(90deg,#26506f 0,#28547a 70px,#33628c 115px,#477aa7 190px,#4f82af 245px,#5688b5 320px,#5b8db9 420px,#5e8fba 600px,#5a89b3 690px,#51799d 750px,#53799b 860px,#4f7696 960px,#4a7090 1024px);"></div>
<div style="left:0px;top:728px;width:1024px;height:40px;background:linear-gradient(180deg,rgba(255,255,255,.10) 0,rgba(255,255,255,.0) 10px,rgba(255,255,255,.0) 20px,rgba(255,255,255,.14) 40px);"></div>
<div style="left:180px;top:728px;width:580px;height:40px;background:linear-gradient(115deg,rgba(255,255,255,0) 0,rgba(255,255,255,0) 28%,rgba(255,255,255,.08) 34%,rgba(255,255,255,0) 44%,rgba(255,255,255,.07) 62%,rgba(255,255,255,.0) 70%,rgba(255,255,255,.06) 84%,rgba(255,255,255,0) 100%);"></div>
<div style="left:0px;top:727px;width:1024px;height:1px;background:#2a3a4a;"></div>
<div style="left:0px;top:728px;width:1024px;height:1px;background:#33465a;"></div>
<div style="left:0px;top:729px;width:1024px;height:1px;background:rgba(255,255,255,.22);"></div>
<div style="left:121.5px;top:729px;width:59.5px;height:38.5px;border:1px solid rgba(10,25,40,.85);border-radius:3.5px;background:linear-gradient(160deg,rgba(255,255,255,.55) 0,rgba(255,255,255,.30) 28%,rgba(255,255,255,.13) 52%,rgba(255,255,255,.10) 100%);box-shadow:inset 0 0 0 1px rgba(255,255,255,.5);"></div>
<div style="left:245px;top:729px;width:60px;height:38.5px;border:1px solid rgba(10,25,40,.85);border-radius:3.5px;background:linear-gradient(160deg,rgba(255,255,255,.55) 0,rgba(255,255,255,.30) 28%,rgba(255,255,255,.13) 52%,rgba(255,255,255,.10) 100%);box-shadow:inset 0 0 0 1px rgba(255,255,255,.5);"></div>
<svg style="left:6px;top:727px" width="44" height="42" viewBox="0 0 44 42">
<defs><radialGradient id="orb" cx="50%" cy="96%" r="75%"><stop offset="0" stop-color="#1fd8fa"/><stop offset=".3" stop-color="#1585c6"/><stop offset=".62" stop-color="#0c4f8c"/><stop offset="1" stop-color="#0b4a84"/></radialGradient>
<linearGradient id="orbh" x1="0" y1="0" x2="0" y2="1"><stop offset="0" stop-color="#c3d3e2" stop-opacity=".95"/><stop offset="1" stop-color="#7f9ab5" stop-opacity=".85"/></linearGradient></defs>
<circle cx="21" cy="21" r="18.600" fill="#a9c6df"/>
<circle cx="21" cy="21" r="17.600" fill="#0b3f73"/>
<circle cx="21" cy="21" r="16.900" fill="url(#orb)"/>
<path d="M4.600 19 A16.600 16.600 0 0 1 37.400 19 Q21 24.500 4.600 19z" fill="url(#orbh)"/>
<path d="M13.300 11 q4.700-1.800 9.400 0 l-1.500 8.500 q-4.600-2-9.300-.5z" fill="#e4531f"/><path d="M15.500 12.500 q3.500-1 6 0 l-1 5.800 q-3-1.200-6-.4z" fill="#f28a1e" opacity=".8"/>
<path d="M23.300 13.100 q4.800 2 9.700.6 l-1.800 8.200 q-4.700 1.500-9.400-.9z" fill="#7cb83e"/><path d="M24 15 q3 1.200 6 .6 l-1 5 q-3 .8-6-.5z" fill="#b8d96a" opacity=".7"/>
<path d="M11 20.400 q4.700-1.800 9.400 0 l-2.100 8.800 q-4.700-2.100-9.400-.6z" fill="#2f8fd8"/><path d="M13 21.500 q3-1 6 0 l-1.200 5 q-3-1.200-6-.5z" fill="#7cc0ee" opacity=".7"/>
<path d="M20.900 22.200 q4.800 2.200 9.700.9 l-2 8.500 q-4.800 1.300-9.700-1.200z" fill="#f6b21e"/><path d="M22 24 q3.500 1.400 6.500.8 l-1.200 5 q-3.200.6-6.400-.8z" fill="#fbd45e" opacity=".7"/>
</svg>
<svg style="left:72px;top:734px" width="32" height="30" viewBox="0 0 32 30">
<rect x="8" y="3" width="20.500" height="23.500" fill="#7fb0da" stroke="#b4d2ec" stroke-width=".8"/>
<rect x="5.500" y="3" width="20.500" height="23.500" fill="#8bbbe2" stroke="#b4d2ec" stroke-width=".8"/>
<rect x="3" y="3" width="20.500" height="23.500" fill="#8fc0e6" stroke="#c2dcf2" stroke-width=".8"/>
<circle cx="13.200" cy="14.600" r="8.800" fill="#f0761c"/><circle cx="13.200" cy="14.600" r="8.800" fill="none" stroke="#f9a65c" stroke-width=".8"/>
<path d="M9.800 9.400 L19 14.600 L9.800 19.800z" fill="#fff"/></svg>
<svg style="left:133px;top:733px" width="36" height="32" viewBox="0 0 36 32">
<path d="M4 5.500 q0-1.500 1.500-1.500 h7 l2 2.500 h-10.500z" fill="#e9d27e"/>
<rect x="3" y="6" width="30" height="22" rx="1.500" fill="#f2dc8a" stroke="#c9ab4e" stroke-width=".8"/>
<rect x="14" y="4.500" width="12" height="4" fill="#f7f7f7"/><rect x="20" y="7" width="12" height="4" fill="#f7f7f7"/>
<rect x="5" y="2.600" width="3" height="2" fill="#2fae43"/><rect x="15" y="5" width="3" height="2" fill="#d7402c"/><rect x="24" y="7.500" width="3" height="2" fill="#2f86d8"/>
<rect x="3" y="11" width="30" height="17" rx="1" fill="#f4df93" stroke="#d0b35a" stroke-width=".6"/>
<path d="M7 29.500 v-11.500 q0-1.500 1.500-1.500 h17 q1.500 0 1.500 1.500 v11.500 h-5 v-7.500 h-10 v7.500z" fill="#9fd8f3" stroke="#e6f6fd" stroke-width="1" opacity=".95"/>
<path d="M9.500 12.500 l.8 5 5 .8 -5 .8 -.8 5 -.8-5 -5-.8 5-.8z" fill="#fff" opacity=".9"/></svg>
<svg style="left:196px;top:731px" width="34" height="32" viewBox="0 0 34 32">
<path d="M3.100 21.600 C3.100 10 10 2.400 18.500 2.400 C26 2.400 31 8 31 15.300 L27.500 16 C27 11 23 7.500 18 8 C12.500 8.500 10.500 13 10.500 19 Z" fill="#20e020"/>
<path d="M3.100 23.500 L19.200 20.400 L30.900 18.400 V20.800 L29.300 24.700 L26.200 26.300 L19.200 23.900 L3.500 29 Z" fill="#5e5e5e"/>
<path d="M23.100 11.800 L28.100 13 L25.800 20.800 L20.300 19.800 Z" fill="#8f9aa6"/><path d="M23.600 13 L27 13.800 L25.200 19.600 L21.500 18.900 Z" fill="#2f7bdc"/>
</svg>
<svg style="left:255px;top:731px" width="40" height="32" viewBox="0 0 40 32">
<path d="M6.600 21.500 A13.600 13.600 0 0 1 33.800 21.500" fill="none" stroke="#3fd94a" stroke-width="5"/>
<rect x="4" y="23.400" width="32.500" height="5.800" fill="#3b7df0"/></svg>
<span class="tray" style="left:753px;top:737.5px;line-height:16px;font-size:12.5pxletter-spacing:-1.38px">DE</span>
<svg style="left:783px;top:745px" width="11" height="8" viewBox="0 0 11 8"><path d="M5.500 1.500L9.800 6.500H1.200z" fill="#fff"/></svg>
<svg style="left:803px;top:739px" width="22" height="20" viewBox="0 0 22 20">
<path d="M4 2.500V17.500" stroke="#fff" stroke-width="1.600"/><path d="M5 3.500 q3.500-2 6.500 0 t6 0 v7 q-3 2-6 0 t-6.500 0z" fill="rgba(255,255,255,.35)" stroke="#fff" stroke-width="1.200"/>
<circle cx="13.300" cy="13.400" r="4.500" fill="#e03030" stroke="#fff" stroke-width=".5"/><path d="M11.300 11.400l4 4m0-4l-4 4" stroke="#fff" stroke-width="1.500"/></svg>
<svg style="left:828px;top:741px" width="18" height="16" viewBox="0 0 18 16">
<g fill="#fff"><path d="M5.200 1.200l3.800 2.500-3.800 2.500-3.800-2.500zM12.800 1.200l3.800 2.500-3.800 2.500-3.800-2.500zM5.200 6.600l3.800 2.500-3.800 2.500-3.800-2.500zM12.800 6.600l3.800 2.500-3.800 2.500-3.800-2.500zM9 10l3.400 2.200-3.400 2.300-3.400-2.300z"/></g></svg>
<svg style="left:851px;top:739px" width="20" height="20" viewBox="0 0 20 20">
<rect x="3" y="4" width="9" height="12.500" rx="1" fill="none" stroke="#fff" stroke-width="1.600"/><rect x="5.500" y="2.400" width="4" height="2" fill="#fff"/>
<path d="M9 7h8v3.500q0 2.500-3 2.500h-2q-3 0-3-2.500z" fill="#fff" stroke="#4f7698" stroke-width=".6"/><path d="M11 3.500v4M15 3.500v4M13 12.500v5" stroke="#fff" stroke-width="1.600"/></svg>
<svg style="left:875px;top:741px" width="19" height="15" viewBox="0 0 19 15">
<g fill="#fff"><rect x="1.500" y="10.500" width="2.400" height="3"/><rect x="4.900" y="8.500" width="2.400" height="5"/><rect x="8.300" y="6.500" width="2.400" height="7"/><rect x="11.700" y="4.200" width="2.400" height="9.300"/><rect x="15.100" y="1.800" width="2.400" height="11.700"/></g></svg>
<svg style="left:899px;top:739px" width="20" height="20" viewBox="0 0 20 20">
<path d="M2.500 7.500h3l4.500-4.500v14l-4.500-4.500h-3z" fill="#fff"/><path d="M12 7q1.600 3 0 6M14.300 5q2.800 5 0 10M16.600 3.400q3.600 6.600 0 13.200" fill="none" stroke="#fff" stroke-width="1.200"/></svg>
<span class="tray" style="left:948.3px;top:732.6px;line-height:16px;letter-spacing:-0.29px">11:08</span>
<span class="tray" style="left:934.7px;top:749.6px;line-height:16px;letter-spacing:-0.67px">31.08.2018</span>
<div style="left:1001px;top:729px;width:22.5px;height:38px;border:1px solid rgba(255,255,255,.45);border-radius:1px;background:linear-gradient(180deg,rgba(255,255,255,.22) 0,rgba(255,255,255,.10) 25%,rgba(0,0,0,.06) 50%,rgba(120,175,220,.35) 100%);box-shadow:-1px 0 0 rgba(20,40,60,.6);"></div>
<div style="left:0px;top:3px;width:1.5px;height:4px;background:#6a6a6a;"></div>
<div style="left:5px;top:22px;width:24px;height:92px;background:linear-gradient(90deg,rgba(0,0,0,.62) 0,rgba(0,0,0,.5) 3px,rgba(0,0,0,.35) 6px,rgba(0,0,0,.19) 10px,rgba(0,0,0,.08) 15px,rgba(0,0,0,0) 21px);-webkit-mask-image:linear-gradient(180deg,#000 0,#000 84px,rgba(0,0,0,0) 92px);mask-image:linear-gradient(180deg,#000 0,#000 84px,rgba(0,0,0,0) 92px);"></div>
<div style="left:0px;top:104px;width:16px;height:9px;background:linear-gradient(180deg,rgba(0,0,0,.32) 0,rgba(0,0,0,.12) 4px,rgba(0,0,0,0) 9px);"></div>
<div style="left:5px;top:13px;width:5px;height:9px;background:linear-gradient(90deg,rgba(20,50,90,.28),rgba(20,50,90,0));"></div>
<div style="left:-6px;top:12.5px;width:11.2px;height:93px;background:linear-gradient(180deg,#f3f8fc 0,#eef4fa 30%,#dfe9f3 48%,#bdd2e6 62%,#a9c3dc 100%);border-radius:4.5px;"></div>
<div style="left:-6px;top:12.5px;width:11.2px;height:93px;background:linear-gradient(90deg,rgba(0,30,80,.10),rgba(255,255,255,.12));border-radius:4.5px;"></div>
</body></html>
